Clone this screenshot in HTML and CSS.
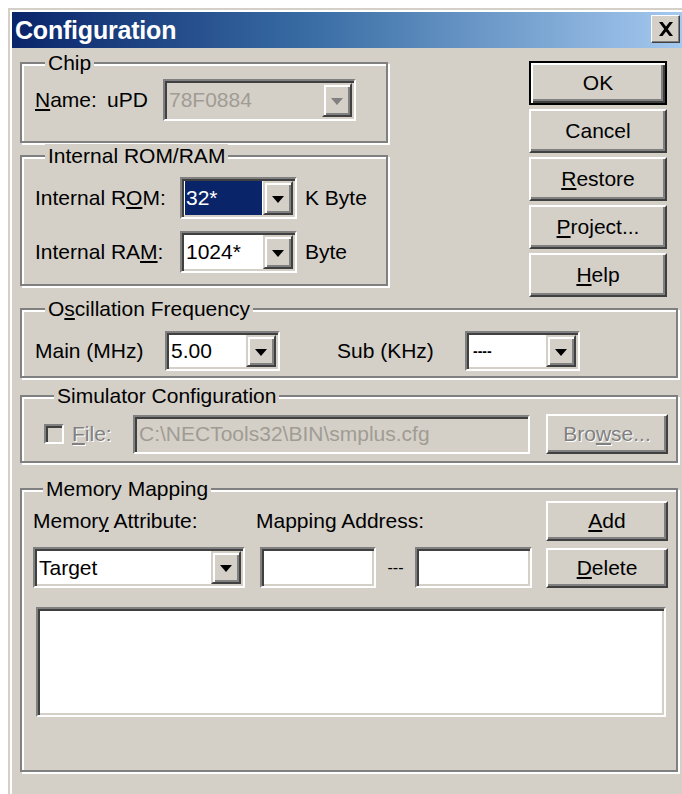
FILE: index.html
```html
<!DOCTYPE html>
<html lang="en">
<head>
<meta charset="utf-8">
<title>Configuration</title>
<link rel="stylesheet" href="styles.css">
</head>
<body>
<div class="window">
  <div class="titlebar">
    <span class="title">Configuration</span>
    <span class="close">
      <svg width="16" height="14" viewBox="0 0 16 14"><path d="M1 0h3.5l3.5 4.6L11.5 0H15l-5.2 7L15 14h-3.5L8 9.4 4.5 14H1l5.2-7z" fill="#000"/></svg>
    </span>
  </div>

  <div class="body">
    <div class="top">
      <div class="left-col">
        <fieldset class="group chip">
          <legend>Chip</legend>
          <div class="row">
            <span class="lbl name-lbl"><u>N</u>ame:</span>
            <span class="lbl upd-lbl">uPD</span>
            <div class="combo combo-chip disabled">
              <span class="val">78F0884</span>
              <span class="drop"><i class="arrow"></i></span>
            </div>
          </div>
        </fieldset>

        <fieldset class="group romram">
          <legend>Internal ROM/RAM</legend>
          <div class="row">
            <span class="lbl mem-lbl">Internal R<u>O</u>M:</span>
            <div class="combo combo-mem">
              <span class="val"><span class="sel">32*</span></span>
              <span class="drop"><i class="arrow"></i></span>
            </div>
            <span class="unit">K Byte</span>
          </div>
          <div class="row row-ram">
            <span class="lbl mem-lbl">Internal RA<u>M</u>:</span>
            <div class="combo combo-mem">
              <span class="val">1024*</span>
              <span class="drop"><i class="arrow"></i></span>
            </div>
            <span class="unit">Byte</span>
          </div>
        </fieldset>
      </div>

      <div class="btn-col">
        <div class="btn default"><span>OK</span></div>
        <div class="btn">Cancel</div>
        <div class="btn"><span><u>R</u>estore</span></div>
        <div class="btn"><span><u>P</u>roject...</span></div>
        <div class="btn"><span><u>H</u>elp</span></div>
      </div>
    </div>

    <fieldset class="group osc">
      <legend>O<u>s</u>cillation Frequency</legend>
      <div class="row">
        <span class="lbl main-lbl">Main (MHz)</span>
        <div class="combo combo-osc">
          <span class="val">5.00</span>
          <span class="drop"><i class="arrow"></i></span>
        </div>
        <span class="lbl sub-lbl">Sub (KHz)</span>
        <div class="combo combo-osc">
          <span class="val small">----</span>
          <span class="drop"><i class="arrow"></i></span>
        </div>
      </div>
    </fieldset>

    <fieldset class="group sim">
      <legend>Simulator Configuration</legend>
      <div class="row">
        <span class="check"></span>
        <span class="lbl file-lbl dis"><u>F</u>ile:</span>
        <div class="field field-path"><span class="dis-val">C:\NECTools32\BIN\smplus.cfg</span></div>
        <div class="btn btn-browse dis">Bro<u>w</u>se...</div>
      </div>
    </fieldset>

    <fieldset class="group mem">
      <legend>Memory Mapping</legend>
      <div class="row row-head">
        <span class="lbl attr-lbl">Memor<u>y</u> Attribute:</span>
        <span class="lbl addr-lbl">Mapping Address:</span>
        <div class="btn btn-side"><span><u>A</u>dd</span></div>
      </div>
      <div class="row row-edit">
        <div class="combo combo-attr">
          <span class="val">Target</span>
          <span class="drop"><i class="arrow"></i></span>
        </div>
        <div class="field field-addr"></div>
        <span class="dash">---</span>
        <div class="field field-addr"></div>
        <div class="btn btn-side"><span><u>D</u>elete</span></div>
      </div>
      <div class="listbox"></div>
    </fieldset>
  </div>
</div>
</body>
</html>
```

FILE: styles.css
```css
html, body {
  margin: 0;
  padding: 0;
  background: #ffffff;
  overflow: hidden;
  height: 794px;
}

body {
  font-family: "Liberation Sans", Arial, sans-serif;
  font-size: 21px;
  color: #000;
}

u { text-decoration: underline; text-underline-offset: 2px; text-decoration-thickness: 2px; }

/* dialog frame */
.window {
  margin: 8px 0 0 8px;
  width: 682px;
  box-sizing: border-box;
  background: #d4d0c8;
  border: 2px solid;
  border-color: #d4d0c8 #404040 #404040 #d4d0c8;
  box-shadow: inset 2px 2px 0 #ffffff, inset -2px -2px 0 #808080;
  padding: 2px;
  height: 820px;
}

.titlebar {
  height: 36px;
  display: flex;
  align-items: center;
  justify-content: space-between;
  padding: 0 6px 0 3px;
  background: linear-gradient(90deg, #0a246a 0%, #3a6ea5 45%, #a6caf0 100%);
}

.title {
  color: #fff;
  font-weight: bold;
  font-size: 25px;
  letter-spacing: -0.2px;
}

.close {
  width: 29px;
  height: 28px;
  margin-top: -2px;
  box-sizing: border-box;
  display: flex;
  align-items: center;
  justify-content: center;
  background: #d4d0c8;
  border: 1px solid;
  border-color: #ffffff #404040 #404040 #ffffff;
  box-shadow: inset -1px -1px 0 #808080;
}

.body {
  padding: 3px 8px 0 8px;
  display: flex;
  flex-direction: column;
}

/* etched group boxes */
.group {
  margin: 0;
  min-width: 0;
  border: 2px solid #808080;
  box-shadow: inset 2px 2px 0 #ffffff, 2px 2px 0 #ffffff;
  padding: 0 0 0 13px;
}

.group legend {
  padding: 0 3px;
  margin-left: 10px;
  line-height: 24px;
  background: #d4d0c8;
}

.row {
  display: flex;
  align-items: center;
}

.lbl { white-space: nowrap; }

/* top area: chip groups + command buttons */
.top {
  display: flex;
  align-items: flex-start;
}

.left-col {
  width: 368px;
  display: flex;
  flex-direction: column;
}

.chip { padding-top: 4px; padding-bottom: 20px; }
.name-lbl { width: 72px; }
.upd-lbl { width: 56px; }

.romram { margin-top: 1px; padding-top: 9px; padding-bottom: 11px; }
.row-ram { margin-top: 12px; }
.mem-lbl { width: 145px; }
.unit { margin-left: 8px; }

.btn-col {
  margin-left: 141px;
  margin-top: 10px;
  width: 138px;
  display: flex;
  flex-direction: column;
  gap: 4px;
}

/* raised push button */
.btn {
  height: 44px;
  box-sizing: border-box;
  display: flex;
  align-items: center;
  justify-content: center;
  background: #d4d0c8;
  border: 2px solid;
  border-color: #ffffff #404040 #404040 #ffffff;
  box-shadow: inset -2px -2px 0 #808080;
  white-space: nowrap;
}

.btn.default {
  border: 2px solid #000;
  box-shadow: inset 2px 2px 0 #ffffff, inset -2px -2px 0 #404040, inset -4px -4px 0 #808080;
}

/* sunken edit / combo frame */
.combo, .field, .listbox, .check {
  box-sizing: border-box;
  border: 2px solid;
  border-color: #808080 #ffffff #ffffff #808080;
  box-shadow: inset 2px 2px 0 #404040, inset -2px -2px 0 #d4d0c8;
  background: #fff;
}

.combo {
  display: flex;
  align-items: stretch;
  height: 42px;
  padding: 2px;
}

.combo .val {
  flex: 1;
  display: flex;
  align-items: center;
  padding-left: 2px;
  white-space: nowrap;
  overflow: hidden;
}

.combo .val.small { font-size: 14px; font-weight: bold; padding-left: 4px; }

.combo .drop {
  width: 30px;
  box-sizing: border-box;
  display: flex;
  align-items: center;
  justify-content: center;
  background: #d4d0c8;
  border: 2px solid;
  border-color: #d4d0c8 #404040 #404040 #d4d0c8;
  box-shadow: inset 2px 2px 0 #ffffff, inset -2px -2px 0 #808080;
}

.arrow {
  width: 0;
  height: 0;
  border-left: 6px solid transparent;
  border-right: 6px solid transparent;
  border-top: 7px solid #000;
  margin-top: 2px;
}

.combo.disabled { background: #d4d0c8; }
.combo.disabled .val { color: #a09c94; }
.combo.disabled .arrow { border-top-color: #808080; }

.combo-chip { width: 193px; }
.combo-mem { width: 117px; }

.sel {
  background: #0a246a;
  color: #fff;
  display: flex;
  align-items: center;
  height: 100%;
  width: 76px;
  margin-left: -1px;
  padding-left: 1px;
}

/* oscillation */
.osc { margin-top: 0; padding-top: 10px; padding-bottom: 5px; }
.main-lbl { width: 130px; }
.combo-osc { width: 115px; height: 40px; }
.sub-lbl { margin-left: 57px; width: 128px; }

/* simulator */
.sim { margin-top: 6px; padding: 6px 0 7px 22px; }
.check { width: 20px; height: 20px; background: #d4d0c8; }
.dis { color: #808080; text-shadow: 1px 1px 0 #ffffff; }
.file-lbl { margin-left: 8px; width: 61px; }
.field-path {
  width: 397px;
  height: 39px;
  background: #d4d0c8;
  display: flex;
  align-items: center;
  padding-left: 4px;
}
.dis-val { color: #a09c94; white-space: nowrap; }
.btn-browse { margin-left: 16px; width: 122px; height: 40px; }

/* memory mapping */
.mem { margin-top: 14px; padding: 0 0 53px 11px; }
.row-head { height: 40px; }
.attr-lbl { width: 223px; }
.addr-lbl { width: 290px; }
.btn-side { width: 122px; height: 40px; }
.row-edit { margin-top: 6px; }
.combo-attr { width: 212px; height: 41px; }
.field-addr { width: 116px; height: 41px; margin-left: 15px; }
.dash { width: 39px; text-align: center; margin-left: 0; font-size: 16px; }
.row-edit .dash + .field-addr { margin-left: 0; width: 117px; }
.row-edit .btn-side { margin-left: 14px; }
.listbox { margin: 19px 0 0 3px; width: 630px; height: 110px; }
```
